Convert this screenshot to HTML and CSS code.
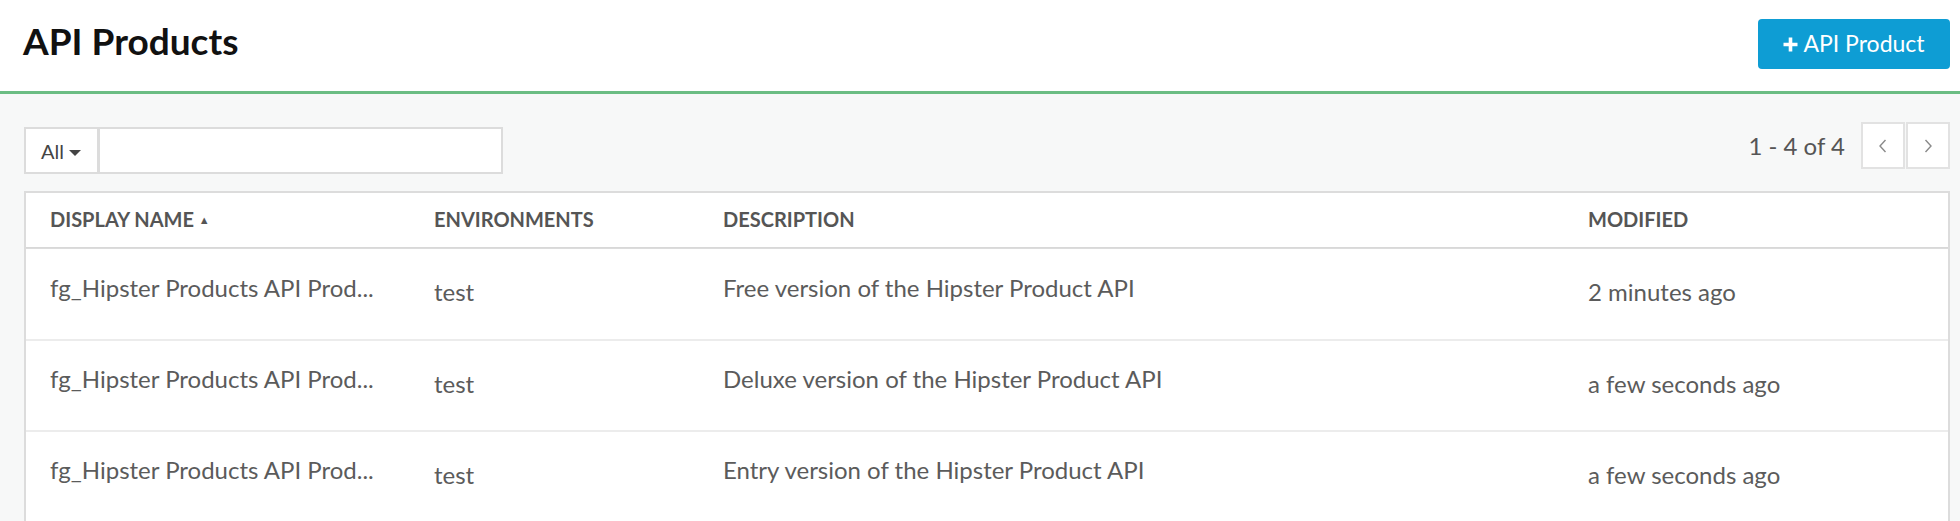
FILE: index.html
```html
<!DOCTYPE html>
<html lang="en">
<head>
<meta charset="utf-8">
<title>API Products</title>
<link rel="stylesheet" href="styles.css">
</head>
<body>
<header class="page-header">
  <h1 class="page-title">API Products</h1>
  <button class="btn-primary" type="button"><svg class="plus" width="15" height="15" viewBox="0 0 15 15"><path d="M7.5 0.5 V14.5 M0.5 7.5 H14.5" stroke="#fff" stroke-width="3.6"/></svg>API Product</button>
</header>
<main class="content">
  <div class="toolbar">
    <div class="search-group">
      <button class="filter-btn" type="button">All <span class="caret"></span></button>
      <input class="search-input" type="text" aria-label="Search">
    </div>
    <div class="pager">
      <span class="pager-text">1 - 4 of 4</span>
      <div class="pager-btns">
        <button class="pager-btn" type="button" aria-label="Previous">
          <svg width="12" height="18" viewBox="0 0 12 18"><path d="M8.5 3 L3 9 L8.5 15" fill="none" stroke="#8a8a8a" stroke-width="1.4"/></svg>
        </button>
        <button class="pager-btn" type="button" aria-label="Next">
          <svg width="12" height="18" viewBox="0 0 12 18"><path d="M3.5 3 L9 9 L3.5 15" fill="none" stroke="#8a8a8a" stroke-width="1.4"/></svg>
        </button>
      </div>
    </div>
  </div>
  <div class="table">
    <div class="row head">
      <div class="cell">DISPLAY NAME <span class="sort">&#9650;</span></div>
      <div class="cell">ENVIRONMENTS</div>
      <div class="cell">DESCRIPTION</div>
      <div class="cell">MODIFIED</div>
    </div>
    <div class="row">
      <div class="cell up">fg_Hipster Products API Prod...</div>
      <div class="cell">test</div>
      <div class="cell up">Free version of the Hipster Product API</div>
      <div class="cell">2 minutes ago</div>
    </div>
    <div class="row">
      <div class="cell up">fg_Hipster Products API Prod...</div>
      <div class="cell">test</div>
      <div class="cell up">Deluxe version of the Hipster Product API</div>
      <div class="cell">a few seconds ago</div>
    </div>
    <div class="row">
      <div class="cell up">fg_Hipster Products API Prod...</div>
      <div class="cell">test</div>
      <div class="cell up">Entry version of the Hipster Product API</div>
      <div class="cell">a few seconds ago</div>
    </div>
  </div>
</main>
</body>
</html>
```
FILE: styles.css
```css
* { box-sizing: border-box; }
html, body { margin: 0; padding: 0; }
body {
  font-family: Lato, "Open Sans", "Liberation Sans", sans-serif;
  background: #f7f8f8;
  color: #5b5b5b;
  overflow: hidden;
}
.page-header {
  height: 94px;
  background: #fff;
  border-bottom: 3px solid #6bbd83;
  display: flex;
  align-items: center;
  justify-content: space-between;
  padding: 0 10px 0 23px;
}
.page-title {
  margin: 0 0 10px 0;
  font-size: 37px;
  font-weight: 700;
  color: #111;
  line-height: 1;
}
.btn-primary {
  width: 192px;
  height: 50px;
  margin-bottom: 3px;
  background: #0e9dd4;
  border: none;
  border-radius: 4px;
  color: #fff;
  font-family: inherit;
  font-size: 23px;
  font-weight: 400;
  padding: 0 0 2px 0;
  display: flex;
  align-items: center;
  justify-content: center;
  gap: 5px;
}
.plus { flex: none; margin-top: 2px; }
.content { padding: 28px 10px 0 24px; }
.toolbar {
  display: flex;
  justify-content: space-between;
  align-items: flex-start;
  height: 69px;
}
.search-group {
  display: flex;
  margin-top: 5px;
  height: 47px;
}
.filter-btn {
  width: 75px;
  height: 47px;
  background: #fff;
  border: 2px solid #dcdcdc;
  font-family: inherit;
  font-size: 20px;
  color: #444;
  padding: 0 0 0 15px;
  text-align: left;
}
.caret {
  display: inline-block;
  width: 0; height: 0;
  border-left: 6px solid transparent;
  border-right: 6px solid transparent;
  border-top: 6px solid #444;
  vertical-align: middle;
  margin-left: 0;
}
.search-input {
  width: 405px;
  height: 47px;
  margin-left: -1px;
  background: #fff;
  border: 2px solid #dcdcdc;
  font-family: inherit;
  font-size: 20px;
  outline: none;
}
.pager { display: flex; align-items: center; gap: 16px; }
.pager-text { font-size: 24px; color: #555; }
.pager-btns { display: flex; }
.pager-btn {
  width: 44px;
  height: 47px;
  background: #fff;
  border: 2px solid #e2e2e2;
  display: flex;
  align-items: center;
  justify-content: center;
  padding: 0;
}
.pager-btn + .pager-btn { margin-left: 1px; }
.table {
  background: #fff;
  border: 2px solid #dcdcdc;
  border-bottom: none;
}
.row {
  display: grid;
  grid-template-columns: 384px 289px 865px 1fr;
  height: 91px;
  border-top: 2px solid #ececec;
  align-items: center;
}
.row.head {
  height: 55px;
  border-top: none;
  border-bottom: 1px solid #d8d8d8;
}
.row.head + .row { border-top: 1px solid #dcdcdc; }
.cell {
  padding-left: 24px;
  font-size: 24px;
  white-space: nowrap;
  overflow: hidden;
  padding-bottom: 5px;
}
.cell.up { padding-bottom: 14px; }
.head .cell {
  font-size: 20px;
  font-weight: 700;
  color: #555;
  padding-bottom: 3px;
}
.sort { font-size: 11px; vertical-align: 3px; }
```
